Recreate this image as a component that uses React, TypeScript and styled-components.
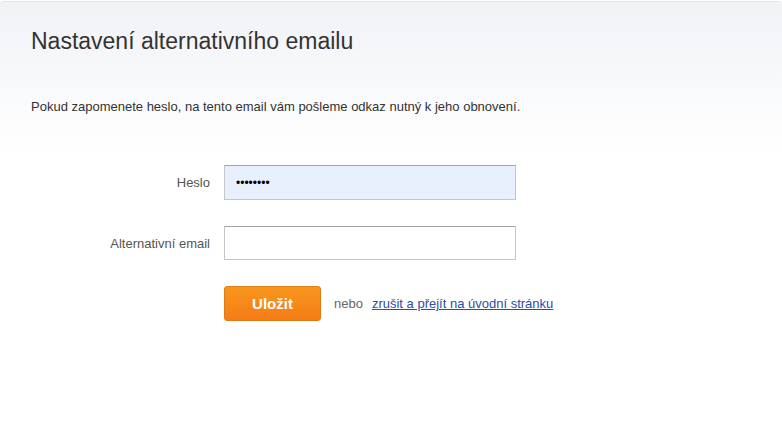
import React from 'react'
import styled, { createGlobalStyle } from 'styled-components'

const GlobalStyle = createGlobalStyle`
  html, body {
    margin: 0;
    padding: 0;
    background: #ffffff;
  }
  body {
    font-family: 'Liberation Sans', Arial, sans-serif;
    color: #333333;
  }
`

const Panel = styled.div`
  margin-top: 1px;
  border-top: 1px solid #e3e5e9;
  border-radius: 4px 4px 0 0;
  background: linear-gradient(to bottom, #f0f2f6 0px, #ffffff 150px);
  min-height: 442px;
`

const Header = styled.div`
  padding: 26px 31px 0;
`

const Title = styled.h1`
  margin: 0;
  font-size: 23px;
  font-weight: normal;
  line-height: 26px;
  color: #333333;
`

const Intro = styled.p`
  margin: 45px 0 0;
  font-size: 13px;
  line-height: 15px;
  color: #333333;
`

const Form = styled.form`
  display: grid;
  grid-template-columns: 210px 292px;
  column-gap: 14px;
  row-gap: 26px;
  align-items: center;
  margin-top: 51px;
`

const Label = styled.label`
  text-align: right;
  font-size: 13px;
  color: #555555;
`

const Input = styled.input<{ $filled?: boolean }>`
  box-sizing: border-box;
  width: 292px;
  height: ${({ $filled }) => ($filled ? '35px' : '34px')};
  margin: 0;
  padding: 0 11px;
  border: 1px solid #c6c6c6;
  border-top-color: #a3a3a3;
  background: ${({ $filled }) => ($filled ? '#e8f0fe' : '#ffffff')};
  font-family: 'Liberation Sans', Arial, sans-serif;
  font-size: 12px;
  color: #000000;
  outline: none;
`

const Actions = styled.div`
  grid-column: 2;
  display: flex;
  align-items: center;
  white-space: nowrap;
`

const SaveButton = styled.button`
  flex-shrink: 0;
  box-sizing: border-box;
  width: 97px;
  height: 35px;
  border: 1px solid #dc7c12;
  border-radius: 3px;
  background: linear-gradient(to bottom, #f8961e, #f47c14);
  color: #ffffff;
  font-family: 'Liberation Sans', Arial, sans-serif;
  font-size: 15px;
  font-weight: bold;
  cursor: pointer;
`

const Or = styled.span`
  margin-left: 13px;
  font-size: 13px;
  color: #666666;
`

const CancelLink = styled.a`
  margin-left: 9px;
  font-size: 13px;
  color: #2a4ea6;
  text-decoration: underline;
`

const App = () => {
  return (
    <>
      <GlobalStyle />
      <Panel>
        <Header>
          <Title>Nastavení alternativního emailu</Title>
          <Intro>
            Pokud zapomenete heslo, na tento email vám pošleme odkaz nutný k jeho obnovení.
          </Intro>
        </Header>
        <Form onSubmit={(e) => e.preventDefault()}>
          <Label htmlFor="heslo">Heslo</Label>
          <Input id="heslo" type="password" defaultValue="12345678" $filled />
          <Label htmlFor="altmail">Alternativní email</Label>
          <Input id="altmail" type="email" />
          <Actions>
            <SaveButton type="submit">Uložit</SaveButton>
            <Or>nebo</Or>
            <CancelLink href="#">zrušit a přejít na úvodní stránku</CancelLink>
          </Actions>
        </Form>
      </Panel>
    </>
  )
}

export default App
